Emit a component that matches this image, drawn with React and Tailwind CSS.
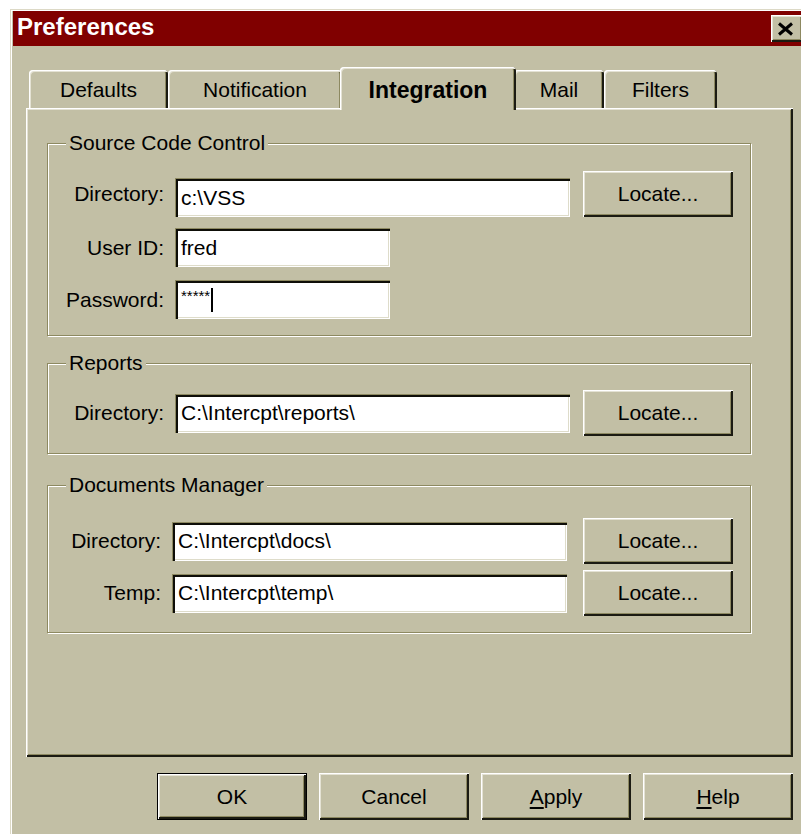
const raised =
  "shadow-[inset_1px_1px_0_#fff,inset_-2px_-2px_0_#1b1b12,inset_2px_2px_0_#e4e2d4,inset_-3px_-3px_0_#8d8961]";
const sunken =
  "shadow-[inset_1px_1px_0_#8d8961,inset_3px_3px_0_#0e0e08,inset_-1px_-1px_0_#fff,inset_-2px_-2px_0_#dedcca]";

function Button({ children, className = "" }) {
  return (
    <button
      type="button"
      className={`flex items-center justify-center bg-[#c2bfa5] text-[21px] text-black ${raised} ${className}`}
    >
      {children}
    </button>
  );
}

function Field({ value, width = "w-[395px]", className = "", children }) {
  return (
    <div
      className={`flex items-center h-[39px] bg-white pl-[6px] text-[21px] text-black whitespace-pre ${sunken} ${width} ${className}`}
    >
      {value}
      {children}
    </div>
  );
}

function Tab({ label, width, active }) {
  if (active) {
    return (
      <div
        className={`relative z-10 -mx-[2px] -mb-[2px] h-[43px] ${width} flex items-center justify-center pt-[3px] bg-[#c2bfa5] rounded-t-[4px] text-[23px] font-bold shadow-[inset_1px_1px_0_#fff,inset_2px_2px_0_#e4e2d4,inset_-2px_0_0_#1b1b12,inset_-3px_0_0_#8d8961]`}
      >
        {label}
      </div>
    );
  }
  return (
    <div
      className={`h-[38px] ${width} flex items-center justify-center pt-[1px] bg-[#c2bfa5] rounded-t-[4px] text-[21px] shadow-[inset_1px_1px_0_#fff,inset_2px_2px_0_#e4e2d4,inset_-2px_0_0_#1b1b12,inset_-3px_0_0_#8d8961]`}
    >
      {label}
    </div>
  );
}

function Group({ title, className = "", children }) {
  return (
    <fieldset
      className={`ml-[19px] w-[704px] border border-[#8d8961] shadow-[inset_1px_1px_0_#fff,1px_1px_0_#fff] ${className}`}
    >
      <legend className="ml-[18px] px-[3px] bg-[#c2bfa5] text-[21px] leading-[24px]">
        {title}
      </legend>
      {children}
    </fieldset>
  );
}

function Label({ children, width = "w-[127px]" }) {
  return <span className={`${width} pr-[11px] text-right text-[21px] shrink-0`}>{children}</span>;
}

export default function App() {
  return (
    <div className="w-[801px] h-[834px] overflow-hidden bg-white font-['Liberation_Sans',Arial,sans-serif] text-black">
      <div className="ml-[10px] mt-[9px] w-[800px] h-[840px] bg-[#c2bfa5] pl-[3px] pt-[2px] shadow-[inset_1px_1px_0_#dcd9c6,inset_2px_2px_0_#fff]">
        {/* caption */}
        <div className="mr-[3px] h-[35px] bg-[#800000] flex items-center justify-between pl-[4px] pr-[4px]">
          <span className="mb-[3px] text-white font-bold text-[24px]">Preferences</span>
          <button
            type="button"
            className={`w-[32px] h-[27px] bg-[#c2bfa5] flex items-center justify-center pr-[3px] ${raised}`}
          >
            <svg width="17" height="14" viewBox="0 0 17 14">
              <path d="M2 1.5 L15 12.5 M15 1.5 L2 12.5" stroke="#000" strokeWidth="3" />
            </svg>
          </button>
        </div>

        <div className="ml-[13px] w-[767px]">
          {/* tabs */}
          <div className="mt-[21px] h-[41px] flex items-end pl-[3px]">
            <Tab label="Defaults" width="w-[139px]" />
            <Tab label="Notification" width="w-[174px]" />
            <Tab label="Integration" width="w-[176px]" active />
            <Tab label="Mail" width="w-[90px]" />
            <Tab label="Filters" width="w-[113px]" />
          </div>

          {/* page */}
          <div className="h-[649px] pl-[2px] pt-[2px] bg-[#c2bfa5] shadow-[inset_1px_1px_0_#fff,inset_-2px_-2px_0_#1b1b12,inset_2px_2px_0_#e4e2d4,inset_-3px_-3px_0_#8d8961]">
            <Group title="Source Code Control" className="mt-[21px] pb-[16px]">
              <div className="mt-[16px] flex items-center h-[46px]">
                <Label>Directory:</Label>
                <Field value={"c:\\VSS"} className="mt-[7px]" />
                <Button className="ml-[13px] w-[150px] h-[46px]">Locate...</Button>
              </div>
              <div className="mt-[11px] flex items-center">
                <Label>User ID:</Label>
                <Field value="fred" width="w-[215px]" />
              </div>
              <div className="mt-[13px] flex items-center">
                <Label>Password:</Label>
                <Field width="w-[215px]">
                  <span className="text-[15px] -mt-[6px]">*****</span>
                  <span className="ml-[1px] w-[2px] h-[24px] bg-black" />
                </Field>
              </div>
            </Group>

            <Group title="Reports" className="mt-[15px] pb-[17px]">
              <div className="mt-[15px] flex items-center h-[46px]">
                <Label>Directory:</Label>
                <Field value={"C:\\Intercpt\\reports\\"} />
                <Button className="ml-[13px] w-[150px] h-[46px]">Locate...</Button>
              </div>
            </Group>

            <Group title="Documents Manager" className="mt-[19px] pb-[16px]">
              <div className="mt-[21px] flex items-center h-[46px]">
                <Label width="w-[124px]">Directory:</Label>
                <Field value={"C:\\Intercpt\\docs\\"} />
                <Button className="ml-[16px] w-[150px] h-[46px]">Locate...</Button>
              </div>
              <div className="mt-[6px] flex items-center h-[46px]">
                <Label width="w-[124px]">Temp:</Label>
                <Field value={"C:\\Intercpt\\temp\\"} />
                <Button className="ml-[16px] w-[150px] h-[46px]">Locate...</Button>
              </div>
            </Group>
          </div>

          {/* dialog buttons */}
          <div className="mt-[16px] flex justify-end gap-[12px]">
            <Button className="w-[150px] h-[47px] border border-black">OK</Button>
            <Button className="w-[150px] h-[47px]">Cancel</Button>
            <Button className="w-[150px] h-[47px]">
              <span className="underline underline-offset-[3px]">A</span>pply
            </Button>
            <Button className="w-[150px] h-[47px]">
              <span className="underline underline-offset-[3px]">H</span>elp
            </Button>
          </div>
        </div>
      </div>
    </div>
  );
}
